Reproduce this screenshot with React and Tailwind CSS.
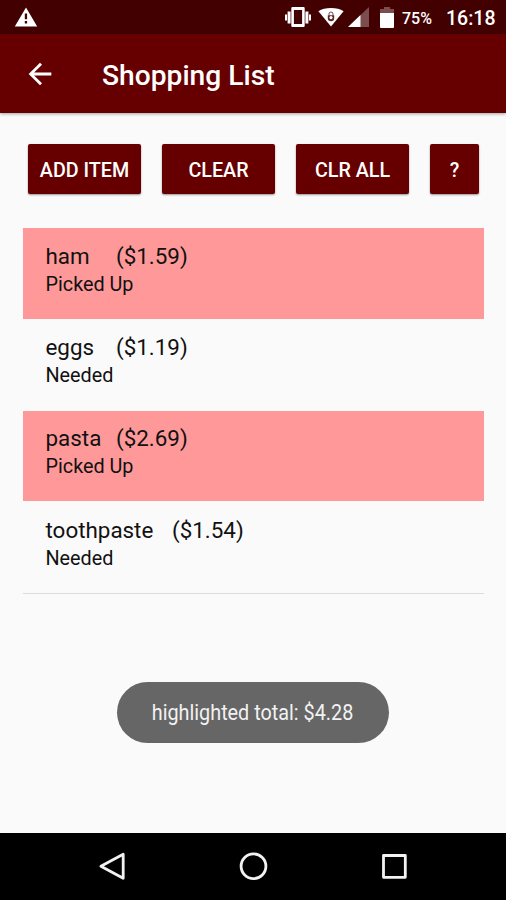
import React from 'react';

const items = [
  { name: 'ham', price: '($1.59)', picked: true },
  { name: 'eggs', price: '($1.19)', picked: false },
  { name: 'pasta', price: '($2.69)', picked: true },
  { name: 'toothpaste', price: '($1.54)', picked: false },
];

function StatusBar() {
  return (
    <div className="flex h-[34px] items-center bg-[#420000] pl-[14px] pr-[11px] text-white">
      <svg className="h-[20px] w-[24px]" viewBox="0 0 24 20" fill="currentColor">
        <path d="M.8 19.4h22.4L12 .6.8 19.4zm12.3-3h-2.3v-2.3h2.3v2.3zm0-4.1h-2.3V6.6h2.3v5.7z" />
      </svg>

      <div className="ml-auto flex items-center">
        {/* vibrate */}
        <svg className="h-[20px] w-[26px]" viewBox="0 0 26 20" fill="currentColor">
          <path d="M0 7.5h2v6H0zM2.6 4.5h3v12h-3zM20.4 4.5h3v12h-3zM24 7.5h2v6h-2z" />
          <path fillRule="evenodd" d="M7.5 0h11a1.2 1.2 0 011.2 1.2v17.6a1.2 1.2 0 01-1.2 1.2h-11a1.2 1.2 0 01-1.2-1.2V1.2A1.2 1.2 0 017.5 0zm1.4 3v14h8.2V3z" />
        </svg>
        {/* wifi */}
        <svg className="ml-[7px] h-[20px] w-[26px]" viewBox="0 0 26 20">
          <path d="M13 19.6L.4 4.2C3.6 1.9 8 .9 13 .9s9.4 1 12.6 3.3L13 19.6z" fill="#fff" />
          <path d="M9.8 8.3h6.4v2.8a3.2 3.2 0 01-6.4 0z" fill="#420000" fillOpacity=".85" />
          <path d="M11 8.3V7a2 2 0 014 0v1.3" fill="none" stroke="#420000" strokeOpacity=".7" />
          <circle cx="13" cy="10.6" r="1.6" fill="#fff" />
        </svg>
        {/* signal */}
        <svg className="ml-[4px] h-[20px] w-[21px]" viewBox="0 0 21 20">
          <path d="M0 20L21 0v20z" fill="#fff" fillOpacity=".3" />
          <path d="M0 20L12.5 8v12z" fill="#fff" />
        </svg>
        {/* battery */}
        <svg className="ml-[11px] h-[21px] w-[14px]" viewBox="0 0 14 21">
          <path d="M4 0h6v2h4v5H0V2h4z" fill="#fff" fillOpacity=".3" />
          <path d="M0 6h14v14a1 1 0 01-1 1H1a1 1 0 01-1-1z" fill="#fff" />
        </svg>
        <span className="ml-[8px] w-[31px] pt-[3px] text-[16px] leading-none font-medium">75%</span>
        <span className="ml-[13px] w-[49px] pt-[3px] text-[19.5px] leading-none font-medium">16:18</span>
      </div>
    </div>
  );
}

function AppBar() {
  return (
    <header className="z-10 flex h-[79px] items-center bg-[#660000] pl-[23px] text-white shadow-[0_1px_3px_rgba(0,0,0,0.35)]">
      <button aria-label="Back">
        <svg className="block h-[34px] w-[34px]" viewBox="0 0 24 24" fill="currentColor">
          <path d="M20 11H7.83l5.59-5.59L12 4l-8 8 8 8 1.41-1.41L7.83 13H20v-2z" />
        </svg>
      </button>
      <h1 className="ml-[45px] pt-[5px] text-[28.2px] leading-none font-medium">Shopping List</h1>
    </header>
  );
}

function ActionButton({ label, className }) {
  return (
    <button
      className={`h-[50px] rounded-[2px] bg-[#660000] pt-[4px] text-[19.7px] font-medium text-white shadow-[0_1px_2px_rgba(0,0,0,0.4)] ${className}`}
    >
      {label}
    </button>
  );
}

function ListItem({ item }) {
  return (
    <li className="h-[91.2px] pb-[1px]">
      <div className={`h-full pt-[13.6px] pl-[22.5px] text-[#111] ${item.picked ? 'bg-[#ff9999]' : ''}`}>
        <div className="flex text-[22.4px] leading-[28px]">
          <span className={item.name.length > 6 ? 'w-[126.5px]' : 'w-[70.5px]'}>{item.name}</span>
          <span>{item.price}</span>
        </div>
        <div className="pt-[1px] text-[19.8px] leading-[28px]">{item.picked ? 'Picked Up' : 'Needed'}</div>
      </div>
    </li>
  );
}

function NavBar() {
  return (
    <nav className="flex h-[67px] items-center justify-center gap-[112px] bg-black">
      <svg className="h-[29px] w-[29px]" viewBox="0 0 29 29" fill="none" stroke="#f2f2f2" strokeWidth="2.8" strokeLinejoin="round">
        <path d="M25.2 2.3v24L2.9 14.3z" />
      </svg>
      <svg className="h-[29px] w-[29px]" viewBox="0 0 29 29" fill="none" stroke="#f2f2f2" strokeWidth="2.8">
        <circle cx="14.5" cy="14.3" r="12.4" />
      </svg>
      <svg className="h-[29px] w-[29px]" viewBox="0 0 29 29" fill="none" stroke="#f2f2f2" strokeWidth="2.8" strokeLinejoin="round">
        <rect x="3.5" y="3.5" width="21.8" height="21.8" />
      </svg>
    </nav>
  );
}

function App() {
  return (
    <div className="flex h-[900px] w-[506px] flex-col overflow-hidden bg-[#fafafa] font-['Roboto',sans-serif]">
      <StatusBar />
      <AppBar />

      <main className="flex flex-1 flex-col">
        <div className="flex gap-[21px] pt-[31px] pl-[28px]">
          <ActionButton label="ADD ITEM" className="w-[113px]" />
          <ActionButton label="CLEAR" className="w-[113px]" />
          <ActionButton label="CLR ALL" className="w-[113px]" />
          <ActionButton label="?" className="w-[49px]" />
        </div>

        <ul className="mt-[34.4px] mr-[22px] ml-[23px] border-b border-[#dcdcdc]">
          {items.map((item) => (
            <ListItem key={item.name} item={item} />
          ))}
        </ul>

        {/* Toast */}
        <div className="mt-[87.5px] flex h-[61px] w-[272px] items-center justify-center self-center rounded-full bg-[#666] pt-[2px] text-[#f2f2f2]">
          <span className="inline-block scale-x-[0.88] text-[22.5px] whitespace-nowrap">highlighted total: $4.28</span>
        </div>
      </main>

      <NavBar />
    </div>
  );
}

export default App;
